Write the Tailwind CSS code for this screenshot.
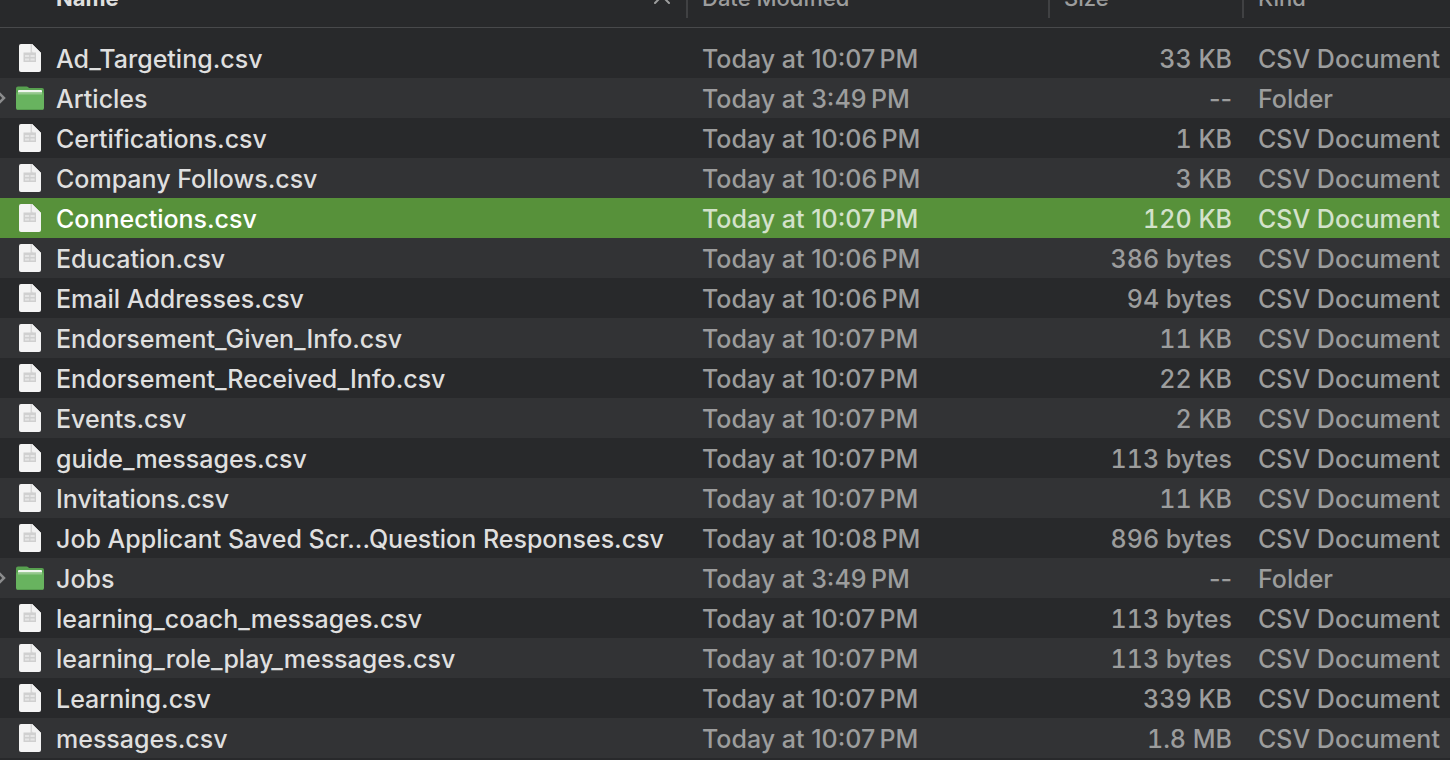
<!DOCTYPE html>
<html lang="en">
<head>
    <meta charset="UTF-8">
    <title>Files</title>
    <script src="https://cdn.jsdelivr.net/npm/@tailwindcss/browser@4"></script>
</head>
<body class="h-screen overflow-hidden bg-[#28292b] font-['Inter','Noto_Sans',sans-serif] text-[25px] leading-9 font-medium text-[#9c9d9d]">
    <!-- Shared icons -->
    <svg class="hidden">
        <symbol id="icon-file" viewBox="0 0 24 30">
            <path d="M3 1h11l9 9V27a2 2 0 0 1-2 2H3a2 2 0 0 1-2-2V3a2 2 0 0 1 2-2z" fill="#f4f4f4"/>
            <path d="M12.500 1v9h10.500l-9-9z" fill="#d6d6d6"/>
            <path d="M14 1l9 9h-7a2 2 0 0 1-2-2z" fill="#f2f2f2"/>
            <path d="M5.500 9.500h12.500v9.500h-12.500z" fill="#d0d0d0"/>
            <path d="M7 12h4.200v2h-4.200zM12.500 12h4.200v2h-4.200zM7 15.500h4.200v2h-4.200zM12.500 15.500h4.200v2h-4.200z" fill="#e6e6e6"/>
        </symbol>
        <symbol id="icon-folder" viewBox="0 0 28 25">
            <path d="M2 0.500h8.500q1 0 1.800.8l.7.700h13a2 2 0 0 1 2 2V14H0V2.500a2 2 0 0 1 2-2z" fill="#57a04f"/>
            <rect x="2" y="4" width="24" height="5" rx="1" fill="#f2f7f1"/>
            <path d="M0 7.500q0-1 1-1h26q1 0 1 1V22a2 2 0 0 1-2 2H2a2 2 0 0 1-2-2z" fill="#68b35f"/>
            <path d="M2 6.500h24v2H2z" fill="#94c68d"/>
            <path d="M1 23.500h26" stroke="#579d4f" stroke-width="1"/>
        </symbol>
    </svg>

    <!-- Header is partly scrolled out at the top -->
    <table class="-mt-[31px] w-full table-fixed border-collapse whitespace-nowrap">
        <colgroup>
            <col>
            <col class="w-[362px]">
            <col class="w-[194px]">
            <col class="w-[206px]">
        </colgroup>
        <thead class="text-[22px]">
            <tr class="h-[58px] border-b border-[#48494b] text-left">
                <th class="p-0 font-bold text-[#dfdfdf]">
                    <div class="flex h-10 items-center justify-between border-r-2 border-[#404143] pr-4 pl-14">
                        Name
                        <svg class="h-3 w-4" viewBox="0 0 16 12" fill="none" stroke="#9c9d9d" stroke-width="2" stroke-linecap="round" stroke-linejoin="round">
                            <path d="M1 11l7-7 7 7"/>
                        </svg>
                    </div>
                </th>
                <th class="p-0 font-medium">
                    <div class="flex h-10 items-center border-r-2 border-[#404143] pl-[14px]">Date Modified</div>
                </th>
                <th class="p-0 font-medium">
                    <div class="flex h-10 items-center border-r-2 border-[#404143] pl-[14px]">Size</div>
                </th>
                <th class="p-0 font-medium">
                    <div class="flex h-10 items-center pl-[14px]">Kind</div>
                </th>
            </tr>
            <tr class="h-[11px]" aria-hidden="true"><td colspan="4" class="p-0"></td></tr>
        </thead>
        <tbody id="files"></tbody>
    </table>

    <script>
        const files = [
            ['Ad_Targeting.csv', '10:07', '33 KB'],
            ['Articles', '3:49', '--', 'folder'],
            ['Certifications.csv', '10:06', '1 KB'],
            ['Company Follows.csv', '10:06', '3 KB'],
            ['Connections.csv', '10:07', '120 KB', 'selected'],
            ['Education.csv', '10:06', '386 bytes'],
            ['Email Addresses.csv', '10:06', '94 bytes'],
            ['Endorsement_Given_Info.csv', '10:07', '11 KB'],
            ['Endorsement_Received_Info.csv', '10:07', '22 KB'],
            ['Events.csv', '10:07', '2 KB'],
            ['guide_messages.csv', '10:07', '113 bytes'],
            ['Invitations.csv', '10:07', '11 KB'],
            ['Job Applicant Saved Scr...Question Responses.csv', '10:08', '896 bytes'],
            ['Jobs', '3:49', '--', 'folder'],
            ['learning_coach_messages.csv', '10:07', '113 bytes'],
            ['learning_role_play_messages.csv', '10:07', '113 bytes'],
            ['Learning.csv', '10:07', '339 KB'],
            ['messages.csv', '10:07', '1.8 MB'],
        ];

        const fileIcon = '<svg class="ml-[18px] h-[30px] w-6"><use href="#icon-file"/></svg>';
        const folderIcon = `
            <svg class="mr-[10px] h-4 w-[6px]" viewBox="0 0 6 16" fill="none" stroke="#8b8c8d" stroke-width="2.500"><path d="M-2 2l6 6-6 6"/></svg>
            <svg class="h-[25px] w-7"><use href="#icon-folder"/></svg>`;

        document.getElementById('files').innerHTML = files.map(([name, time, size, type]) => {
            const folder = type === 'folder';
            const row = type === 'selected' ? 'bg-[#57913a] text-[#d3e2cb]' : 'even:bg-[#323335]';
            const label = type === 'selected' ? 'text-white' : 'text-[#dfdfdf]';
            return `
                <tr class="h-10 ${row}">
                    <td class="p-0">
                        <div class="flex h-10 items-center">
                            <span class="flex w-14 shrink-0 items-center">${folder ? folderIcon : fileIcon}</span>
                            <span class="pt-0.5 ${label}">${name}</span>
                        </div>
                    </td>
                    <td class="p-0 pt-0.5 pl-[14px]">Today at ${time}&#8239;PM</td>
                    <td class="p-0 pt-0.5 pr-3 text-right ${folder ? '' : 'tabular-nums'}">${size}</td>
                    <td class="p-0 pt-0.5 pl-[14px]">${folder ? 'Folder' : 'CSV Document'}</td>
                </tr>`;
        }).join('');
    </script>
</body>
</html>
